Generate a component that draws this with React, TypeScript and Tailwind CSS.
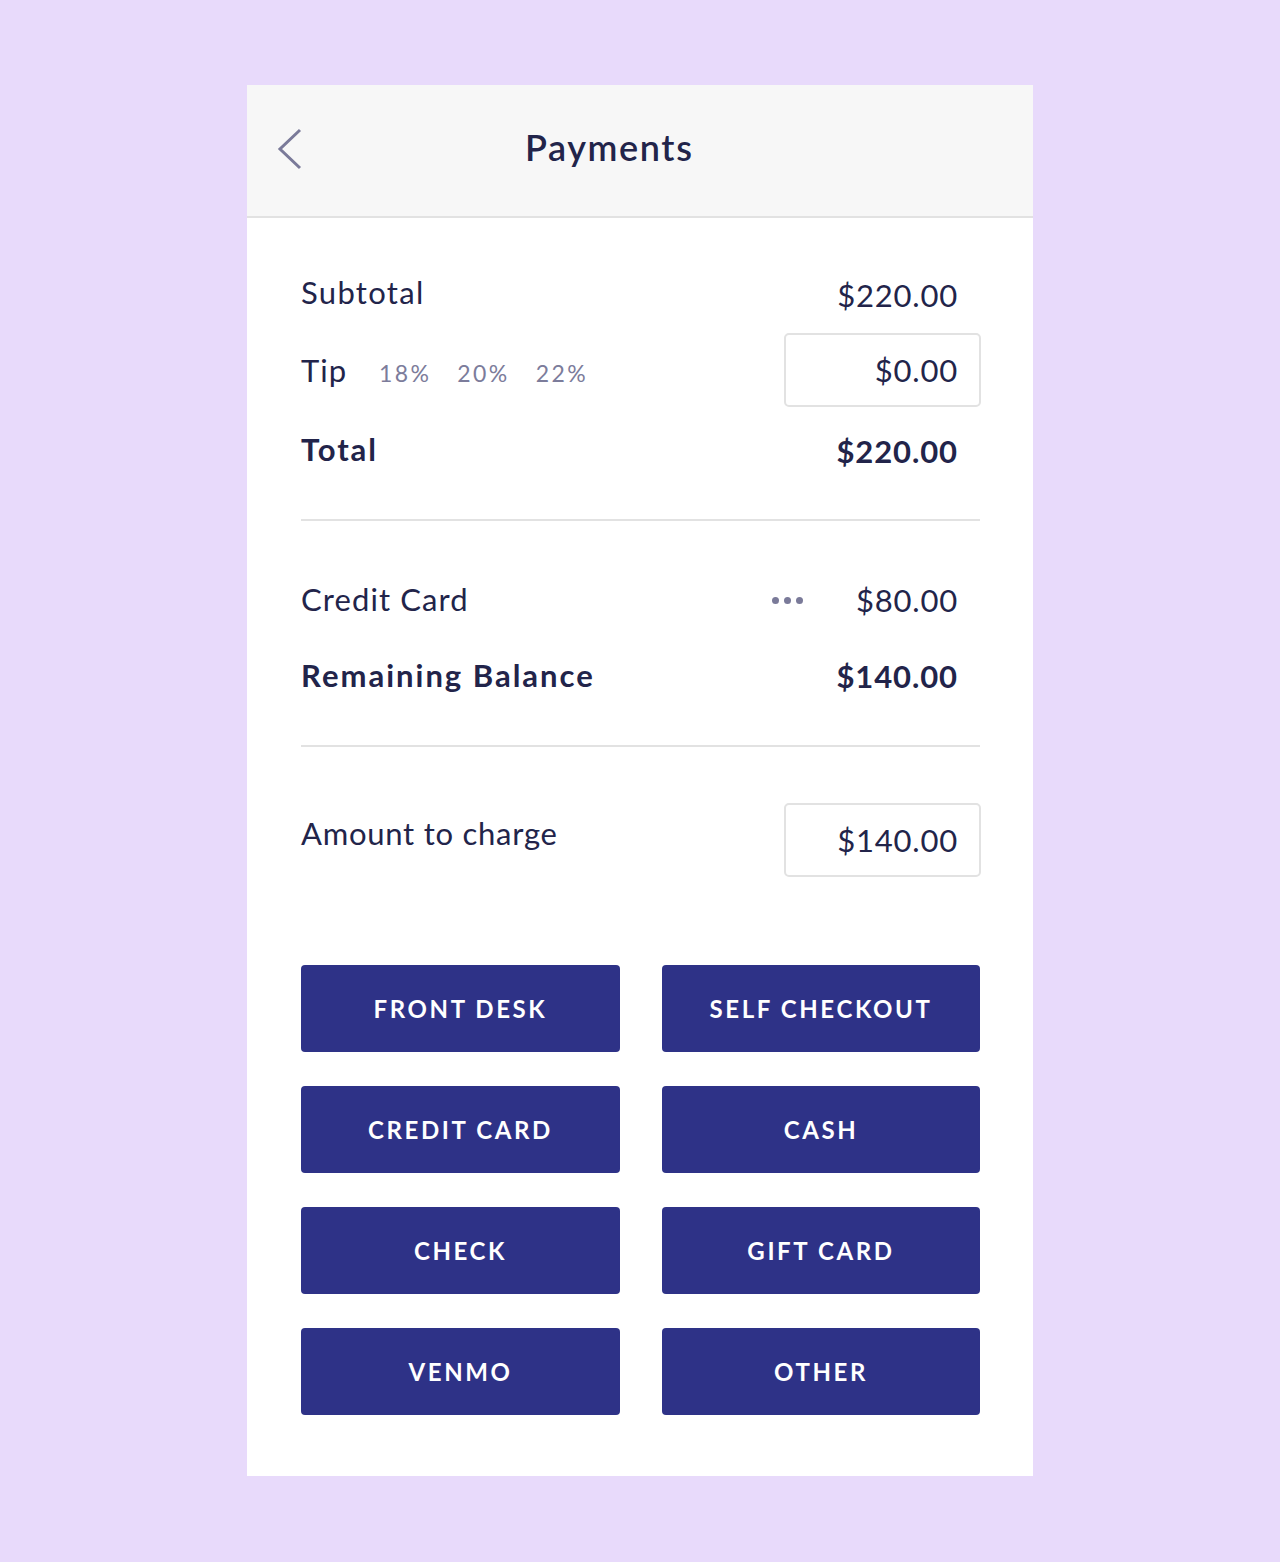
import React from "react";

const font = { fontFamily: "Lato, 'Noto Sans', sans-serif" };

function Btn({ label }: { label: string }) {
  return (
    <button className="h-[87px] rounded-[4px] bg-[#2e3287] text-white text-[24px] font-bold tracking-[2.6px] flex items-center justify-center">
      {label}
    </button>
  );
}

export default function App() {
  return (
    <div className="min-h-[1562px] bg-[#e8dafb] pt-[85px] pb-[86px]" style={font}>
      <div className="mx-auto w-[786px] bg-white text-[#22244a]">
        <div className="h-[133px] bg-[#f7f7f7] border-b-2 border-[#e2e2e2] flex items-center">
          <div className="pl-[30px] w-[56px] flex items-center -mt-[4px]">
            <svg width="26" height="42" viewBox="0 0 26 42" fill="none">
              <polyline points="23,2 3,21 23,40" stroke="#7a7a99" strokeWidth="3" fill="none" />
            </svg>
          </div>
          <div className="ml-[222px] -mt-[8px] text-[36px] font-semibold tracking-[1.6px] leading-none">Payments</div>
        </div>

        <div className="pl-[54px] pr-[53px]">
          {/* Section 1 */}
          <div className="pt-[49px] pb-[40px] border-b-2 border-[#e2e2e2]">
            <div className="h-[56px] flex items-center justify-between">
              <span className="text-[31px] tracking-[1.3px] -mt-[5px]">Subtotal</span>
              <span className="text-[31px] tracking-[0.8px] pr-[22px]">$220.00</span>
            </div>
            <div className="mt-[10px] h-[74px] flex items-center justify-between">
              <div className="flex items-baseline">
                <span className="text-[31px] tracking-[1px]">Tip</span>
                <span className="ml-[32px] text-[23px] text-[#7c7c9b] tracking-[2.4px]">18%</span>
                <span className="ml-[26px] text-[23px] text-[#7c7c9b] tracking-[2.4px]">20%</span>
                <span className="ml-[26px] text-[23px] text-[#7c7c9b] tracking-[2.4px]">22%</span>
              </div>
              <div className="w-[197px] h-[74px] border-2 border-[#e2e2e2] rounded-[5px] flex items-center justify-end pr-[21px] -mr-[1px] text-[31px] tracking-[0.8px]">
                $0.00
              </div>
            </div>
            <div className="mt-[16px] h-[56px] flex items-center justify-between font-bold">
              <span className="text-[31px] tracking-[1.9px] -mt-[4px]">Total</span>
              <span className="text-[31px] tracking-[0.9px] pr-[22px]">$220.00</span>
            </div>
          </div>

          {/* Section 2 */}
          <div className="pt-[51px] pb-[41px] border-b-2 border-[#e2e2e2]">
            <div className="h-[56px] flex items-center justify-between">
              <span className="text-[31px] tracking-[1.1px] -mt-[2px]">Credit Card</span>
              <div className="flex items-center pr-[22px]">
                <div className="flex gap-[5px]">
                  <span className="w-[7px] h-[7px] rounded-full bg-[#7a7a99]" />
                  <span className="w-[7px] h-[7px] rounded-full bg-[#7a7a99]" />
                  <span className="w-[7px] h-[7px] rounded-full bg-[#7a7a99]" />
                </div>
                <span className="ml-[53px] text-[31px] tracking-[0.8px]">$80.00</span>
              </div>
            </div>
            <div className="mt-[20px] h-[56px] flex items-center justify-between font-bold">
              <span className="text-[31px] tracking-[2px] -mt-[2px]">Remaining Balance</span>
              <span className="text-[31px] tracking-[0.9px] pr-[22px]">$140.00</span>
            </div>
          </div>

          {/* Section 3 */}
          <div className="pt-[56px] flex items-start justify-between">
            <span className="mt-[7px] text-[31px] tracking-[0.75px]">Amount to charge</span>
            <div className="w-[197px] h-[74px] border-2 border-[#e2e2e2] rounded-[5px] flex items-center justify-end pr-[21px] -mr-[1px] text-[31px] tracking-[0.8px]">
              $140.00
            </div>
          </div>

          <div className="mt-[88px] pb-[61px] grid grid-cols-[319px_318px] gap-x-[42px] gap-y-[34px]">
            <Btn label="FRONT DESK" />
            <Btn label="SELF CHECKOUT" />
            <Btn label="CREDIT CARD" />
            <Btn label="CASH" />
            <Btn label="CHECK" />
            <Btn label="GIFT CARD" />
            <Btn label="VENMO" />
            <Btn label="OTHER" />
          </div>
        </div>
      </div>
    </div>
  );
}
